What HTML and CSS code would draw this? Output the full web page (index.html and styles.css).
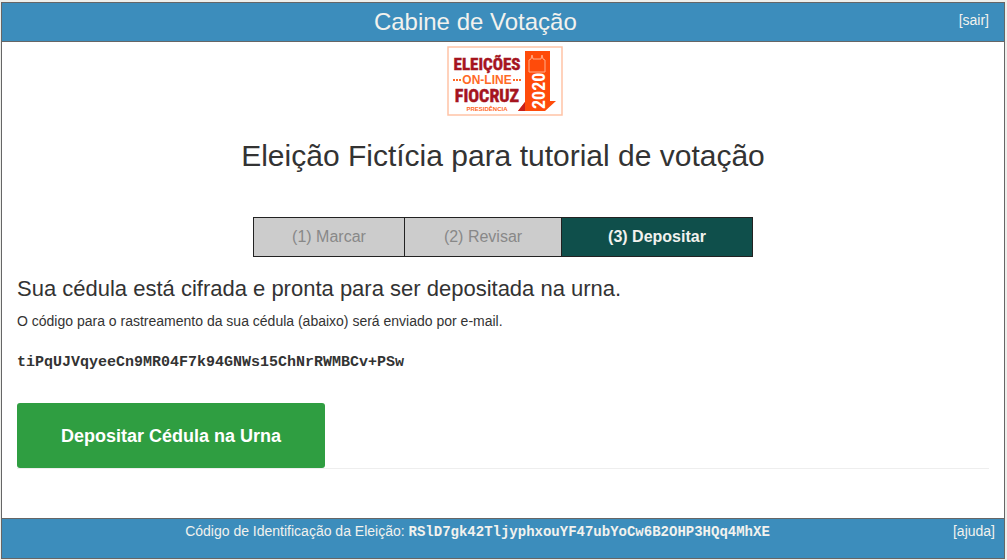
FILE: index.html
```html
<!DOCTYPE html>
<html lang="pt-br">

<head>
    <meta charset="UTF-8">
    <meta name="viewport" content="width=device-width, initial-scale=1">
    <title>Cabine de Votação</title>
    <link rel="stylesheet" href="styles.css">
</head>

<body>
    <div class="booth">
        <header class="header">
            <div class="header-title">Cabine de Votação</div>
            <a class="exit" href="#">[sair]</a>
        </header>

        <main class="content">
            <svg class="logo" viewBox="-4 0 120 70" role="img" aria-label="Eleições On-line Fiocruz Presidência 2020">
                <rect x="1" y="1" width="114" height="68" fill="#fff" stroke="#ffc3a6" stroke-width="1.5"/>
                <g class="logo-name" text-anchor="middle">
                    <text x="40" y="24">ELEIÇÕES</text>
                    <text class="logo-org" x="40" y="56">FIOCRUZ</text>
                </g>
                <text class="logo-online" x="40" y="38" text-anchor="middle">ON-LINE</text>
                <path d="M6 34h8M66 34h8" stroke="#ff6a26" stroke-width="2" stroke-dasharray="2 1"/>
                <text class="logo-office" x="40" y="65" text-anchor="middle">PRESIDÊNCIA</text>
                <!-- seta com o castelo -->
                <path d="M78 5h25v50h6L98 65H71l7-9z" fill="#ff4b0a"/>
                <path d="M71 65l7-9v9z" fill="#c8201a"/>
                <path d="M82 26V14l2-1 1-4 1 4h8l1-4 1 4 2 1v12z" fill="none" stroke="#ffae8a" stroke-width="1"/>
                <text class="logo-year" transform="translate(98 63) rotate(-90)">2020</text>
            </svg>

            <h1 class="election">Eleição Fictícia para tutorial de votação</h1>

            <ol class="steps">
                <li>(1) Marcar</li>
                <li>(2) Revisar</li>
                <li class="current" aria-current="step">(3) Depositar</li>
            </ol>

            <h2 class="status">Sua cédula está cifrada e pronta para ser depositada na urna.</h2>
            <p class="info">O código para o rastreamento da sua cédula (abaixo) será enviado por e-mail.</p>
            <p class="tracker">tiPqUJVqyeeCn9MR04F7k94GNWs15ChNrRWMBCv+PSw</p>

            <form class="cast">
                <button type="button">Depositar Cédula na Urna</button>
            </form>
        </main>

        <footer class="footer">
            <p class="fingerprint">Código de Identificação da Eleição: <code>RSlD7gk42TljyphxouYF47ubYoCw6B2OHP3HQq4MhXE</code></p>
            <a class="help" href="#">[ajuda]</a>
        </footer>
    </div>
</body>

</html>
```
FILE: styles.css
```css
* {
    box-sizing: border-box;
}

body,
h1,
h2,
p,
ol {
    margin: 0;
    padding: 0;
    font-weight: normal;
}

body {
    min-height: 100vh;
    display: flex;
    padding: 2px 2px 1px 1px;
    background: #eeefeb;
    color: #333;
    font-family: "Liberation Sans", Arial, sans-serif;
    font-size: 14px;
    line-height: 20px;
}

.booth {
    flex: 1;
    display: flex;
    flex-direction: column;
    border: 1px solid #666;
    background: #fff;
}

.header,
.footer {
    display: flex;
    background: #3c8dbc;
    color: #f2f2ee;
}

.header {
    gap: 10px;
    padding-right: 15px;
    border-bottom: 1px solid #666;
}

.header-title {
    flex: 1;
    font-size: 24px;
    line-height: 38px;
    text-align: center;
}

.exit,
.help {
    color: inherit;
    text-decoration: none;
}

.exit {
    padding-top: 7px;
}

.content {
    flex: 1;
    padding: 4px 15px 48px;
}

.logo {
    display: block;
    width: 120px;
    height: 70px;
    margin: 0 auto;
    font-family: "Liberation Sans", Arial, sans-serif;
    font-weight: bold;
}

.logo-name,
.logo-year {
    font-family: "Roboto Condensed", "Open Sans Condensed", "DejaVu Sans Condensed", sans-serif;
}

.logo-name {
    fill: #a5141e;
    stroke: #a5141e;
    stroke-width: 0.5;
    font-size: 17px;
}

.logo-org {
    font-size: 18px;
}

.logo-online {
    fill: #ff6a26;
    font-size: 12px;
}

.logo-office {
    fill: #ff6a26;
    font-size: 6px;
}

.logo-year {
    fill: #fff;
    font-size: 18px;
}

.election {
    margin: 20px 0 41px;
    font-size: 30px;
    line-height: 40px;
    text-align: center;
}

.steps {
    display: flex;
    width: fit-content;
    margin: 0 auto;
    border: 1px solid #222;
    background: #ccc;
    color: #888;
    font-size: 16px;
    line-height: 38px;
    list-style: none;
}

.steps li {
    padding: 0 38px;
    border-right: 1px solid #222;
}

.steps li + li {
    padding: 0 39px;
}

.steps .current.current {
    padding: 0 46px;
    border-right: 0;
    background: #0f4f4b;
    color: #f2f2ee;
    font-weight: bold;
}

.status {
    margin: 17px 0 7px;
    font-size: 22px;
    line-height: 30px;
}

.tracker {
    margin: 22px 0 30px;
    font-family: "Liberation Mono", monospace;
    font-size: 15px;
    font-weight: bold;
    overflow-wrap: anywhere;
}

.cast {
    border-bottom: 1px solid #eee;
}

.cast button {
    display: block;
    padding: 23px 44px 22px;
    border: 0;
    border-radius: 3px;
    background: #2f9e41;
    color: #fff;
    font: bold 18px/20px "Liberation Sans", Arial, sans-serif;
    cursor: pointer;
}

.footer {
    padding: 2px 9px 17px 0;
    border-top: 1px solid #666;
}

.fingerprint {
    flex: 1;
    text-align: center;
}

.fingerprint code {
    font-family: "Liberation Mono", monospace;
    font-size: 14px;
    font-weight: bold;
    line-height: 1;
    overflow-wrap: anywhere;
}
```
